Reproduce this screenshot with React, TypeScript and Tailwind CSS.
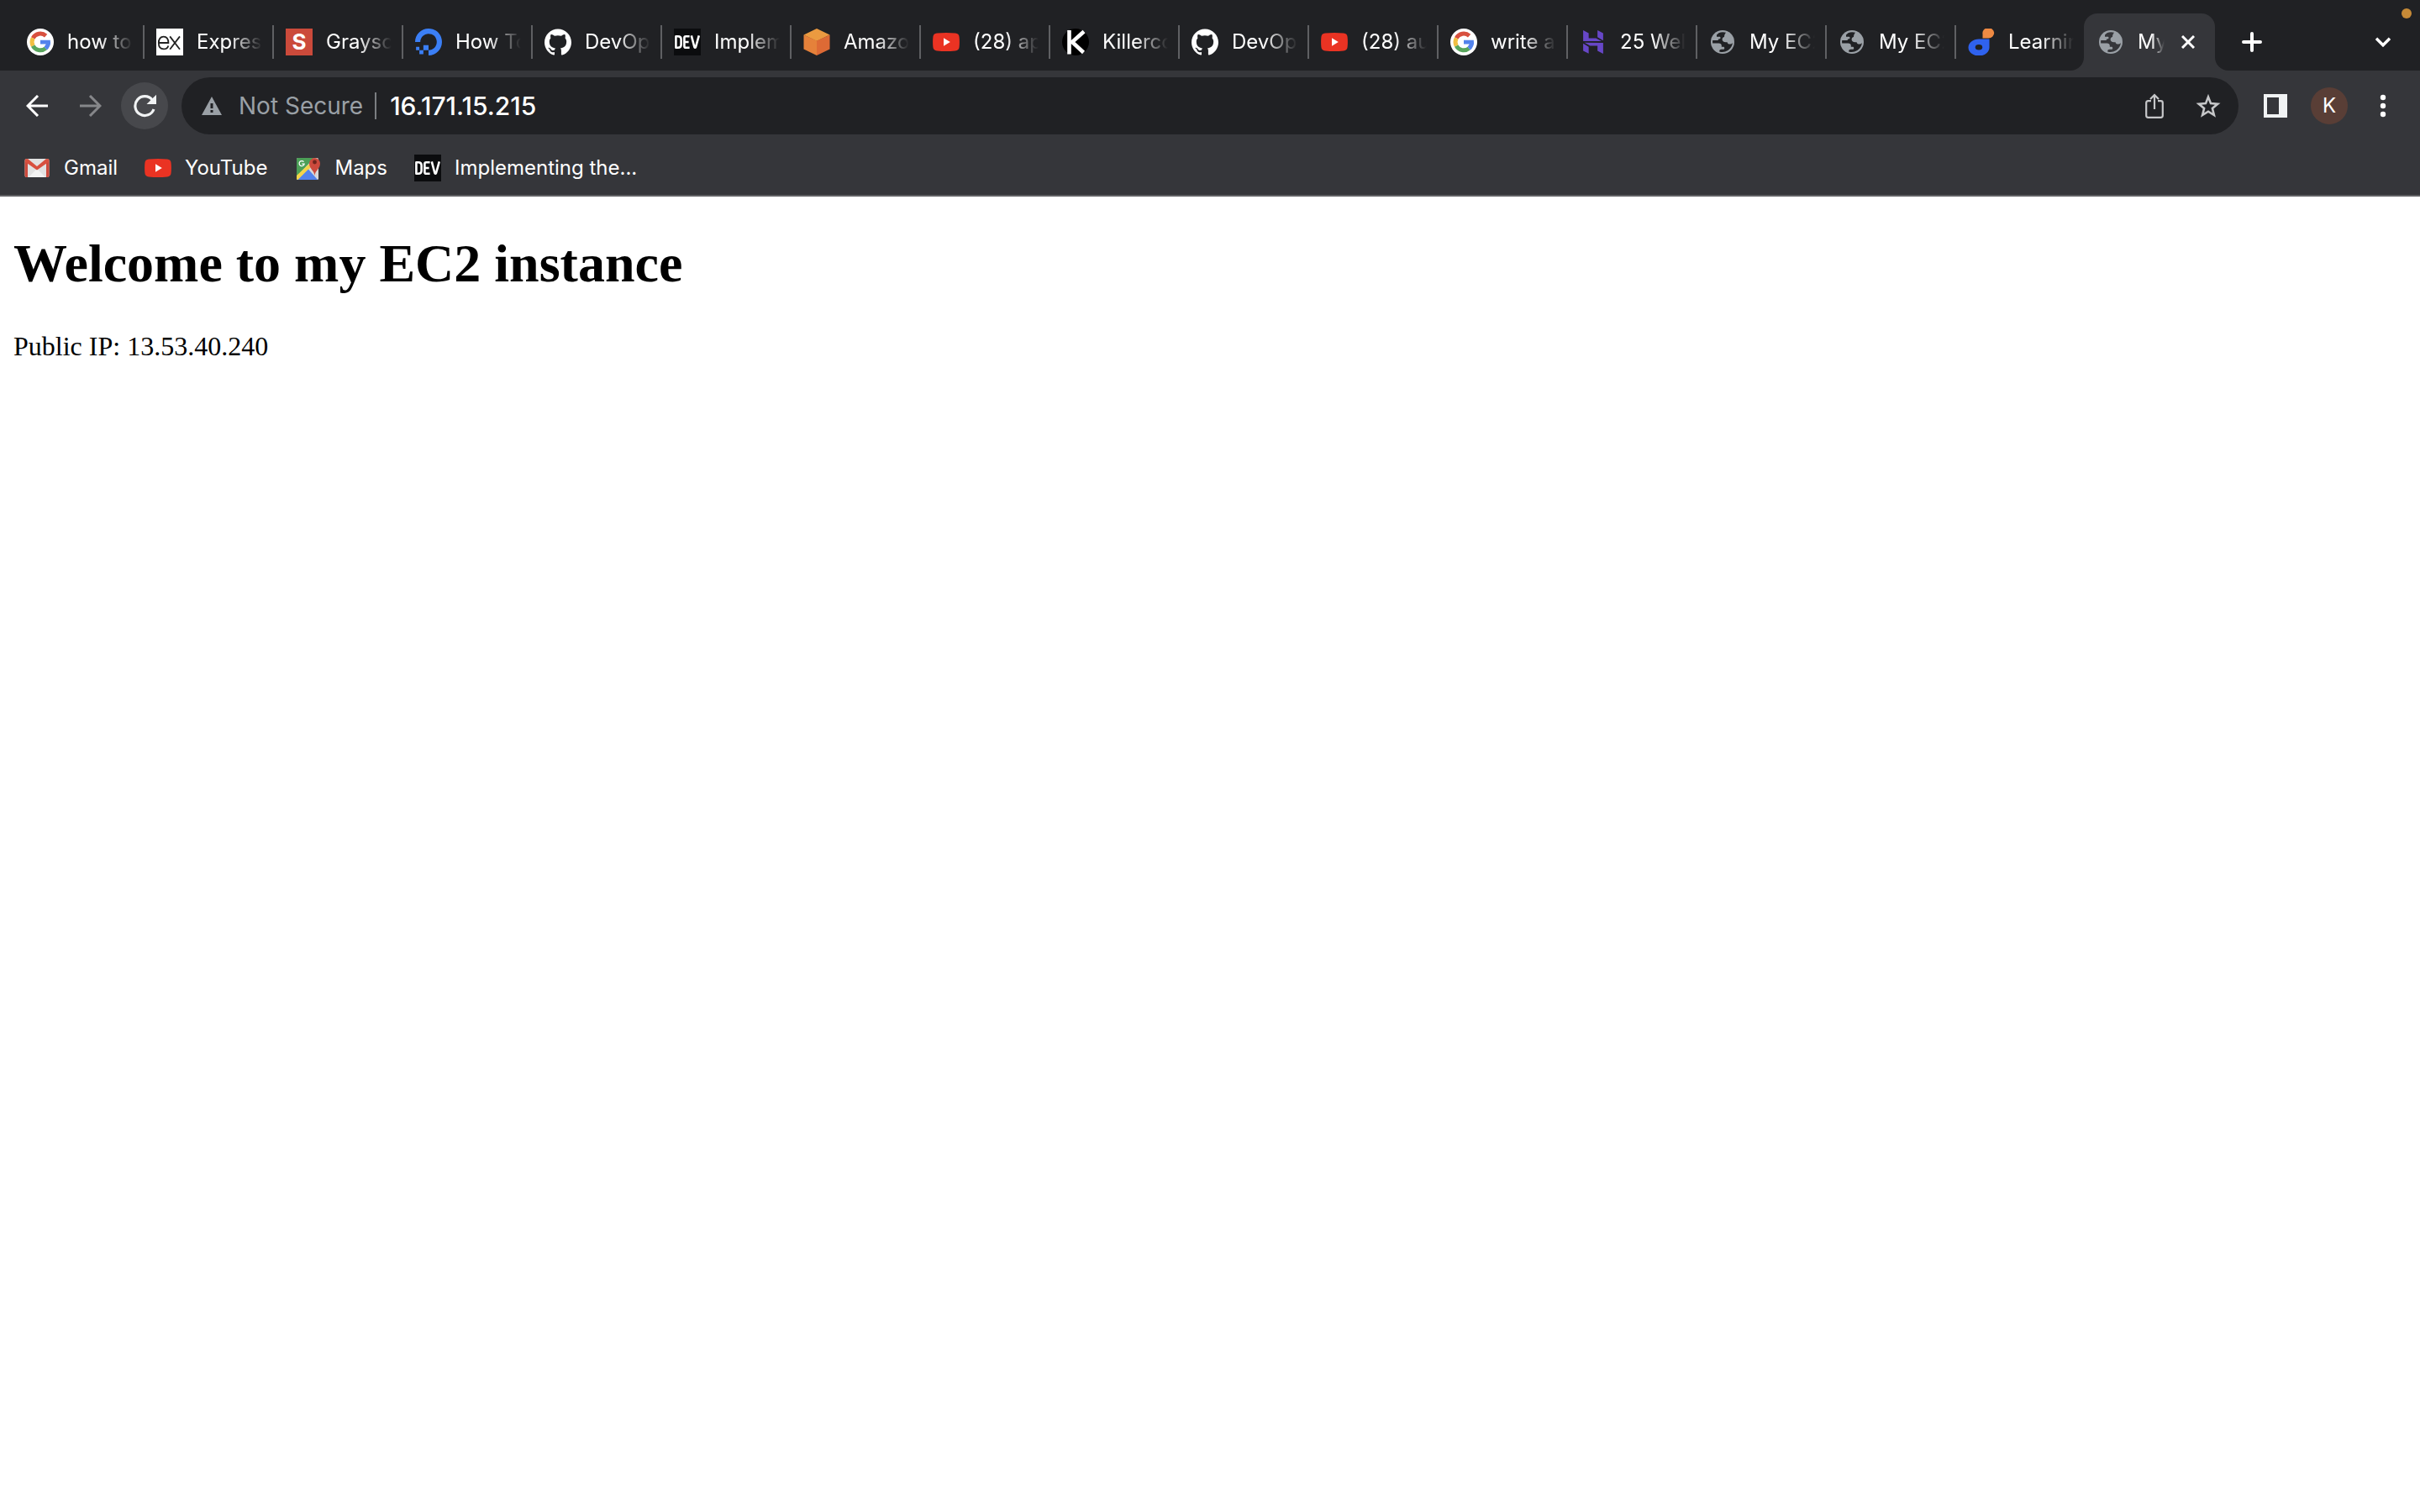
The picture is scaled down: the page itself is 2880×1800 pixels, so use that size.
import React from "react";
import { SiGithub, SiDigitalocean, SiHostinger } from "react-icons/si";

function GoogleIcon() {
  return (
    <svg viewBox="0 0 32 32" className="size-8">
      <circle cx="16" cy="16" r="16" fill="#fff" />
      <g fill="none" strokeWidth="5">
        <path d="M22.6 8.6A10 10 0 0 0 7.2 11.4" stroke="#d8503f" />
        <path d="M7.2 11.4A10 10 0 0 0 7.2 20.6" stroke="#f1bf42" />
        <path d="M7.2 20.6A10 10 0 0 0 22.2 23.6" stroke="#58a55c" />
        <path d="M22.2 23.6A10 10 0 0 0 25.6 16.2" stroke="#5383ec" />
      </g>
      <path d="M16 13.8h11.8l.2 4.6H16z" fill="#5383ec" />
    </svg>
  );
}

function ExpressIcon() {
  return (
    <svg viewBox="0 0 32 32" className="size-8">
      <rect width="32" height="32" fill="#fff" />
      <g fill="none" stroke="#222" strokeWidth="1.8">
        <path d="M3 17h11.4c0-4.500-2-7.400-5.700-7.400S2.800 12.500 2.800 17s2.200 7.400 6 7.400c2.800 0 4.800-1.400 5.500-4" />
        <path d="M16.200 9.400 28 24.700M28 9.400 16.200 24.700" />
      </g>
    </svg>
  );
}

function LetterSIcon() {
  return (
    <span className="flex size-8 items-center justify-center bg-[#cb4a3b] text-[26px] leading-8 font-bold text-white">
      S
    </span>
  );
}

function DevIcon() {
  return (
    <svg viewBox="0 0 32 32" className="size-8">
      <rect width="32" height="32" fill="#0b0c0e" />
      <g fill="none" stroke="#fff" strokeWidth="2.6" strokeLinejoin="round">
        <path d="M2.400 9.200v13.600h2.400q3.800 0 3.800-3.800v-6q0-3.800-3.800-3.800z" />
        <path d="M18.600 9.200h-4.400q-1.800 0-1.800 1.800v10q0 1.800 1.800 1.800h4.400M12.400 16h5.200" />
        <path d="M20.800 8.400l3.600 13.600q.8 1.600 1.600 0L29.800 8.400" />
      </g>
    </svg>
  );
}

function CubeIcon() {
  return (
    <svg viewBox="0 0 32 32" className="size-8">
      <path d="M16 0 31.500 7.500 16 15 .5 7.500z" fill="#eb9a40" />
      <path d="M.5 7.500 16 14.500V32L.5 24.500z" fill="#e5813a" />
      <path d="M31.500 7.500 16 14.500V32l15.500-7.500z" fill="#dd6a35" />
    </svg>
  );
}

function YouTubeIcon() {
  return (
    <svg viewBox="0 0 32 32" className="size-8">
      <path
        d="M5 5.600Q16 4.400 27 5.600q4.300.4 4.600 4.400.6 6 0 12-.3 4-4.600 4.400Q16 27.600 5 26.400.700 26 .4 22q-.6-6 0-12Q.700 6 5 5.600z"
        fill="#ea3323"
      />
      <path d="M13 11.200 20.800 16 13 20.800z" fill="#fff" />
    </svg>
  );
}

function KillercodaIcon() {
  return (
    <svg viewBox="0 0 32 32" className="size-8">
      <circle cx="16" cy="16" r="16" fill="#000" />
      <path d="M8.500 2v28.500M26 3.500 12 16l13.500 12.500" fill="none" stroke="#fff" strokeWidth="4.6" />
    </svg>
  );
}

function GlobeIcon() {
  return (
    <svg viewBox="0 0 32 32" className="size-8">
      <circle cx="16" cy="16" r="14" fill="#9aa0a6" />
      <path
        d="M20 4.800C17.500 3.900 14 4 11.500 5.200L9 7.500v2.300h3.200c.9 0 1.300.5 1.300 1.300 0 1-.6 1.400-1.500 1.400-1 0-1.300.6-1.300 1.500H4.200c-.2 1.200-.2 2.200 0 3.500h7.300c2 0 3.300 1 3.300 2.700v1.600h2c1 0 1.400.6 1.400 1.400 0 1-.5 1.500-1.500 1.500h-2c-1.600 0-2.500.9-2.500 2.300v.4c2 .7 4.500.8 6.800.1 5-1.400 8.500-5.800 8.900-10.500-.8 1-2 1.600-3.300 1.600-1.800 0-2.700-.9-3-2.300h-1.800c-2.700 0-4.200-1.200-4.200-3.200 0-1.700 1-2.700 2.400-3 0-2.300.6-3.700 2-5.300z"
        className="fill-current"
      />
    </svg>
  );
}

function DropIcon() {
  return (
    <svg viewBox="0 0 32 32" className="size-8">
      <path d="M17.500 11.500V6.500a6.900 6.200 0 1 1 6.900 5z" fill="#ef8a43" />
      <path d="M25.500 12.500v9.500a12.500 10 0 1 1-12.500-9.500z" fill="#2f62ee" />
      <ellipse cx="13" cy="22.300" rx="4.200" ry="3.200" fill="#202124" />
    </svg>
  );
}

function GmailIcon() {
  return (
    <svg viewBox="0 0 32 32" className="size-8">
      <rect x="1.500" y="5" width="29" height="22" rx="2" fill="#e2e2e2" />
      <path d="M6 27 16 17l10 10z" fill="#f3f3f3" />
      <path d="M1.500 7q0-2 2-2L5 8v19H3.500q-2 0-2-2zM30.500 7q0-2-2-2L27 8v19h1.500q2 0 2-2z" fill="#cc4a3d" />
      <path d="M2 6.500q1-1.500 3-1.500l11 9 11-9q2 0 3 1.500v2.200L16 18.500 2 8.700z" fill="#d8503f" />
    </svg>
  );
}

function MapsIcon() {
  return (
    <svg viewBox="0 0 32 32" className="size-8">
      <rect x="3" y="4" width="26" height="26" rx="1.500" fill="#d8d8d8" />
      <path d="M4.500 4H24L3 26V5.500Q3 4 4.500 4z" fill="#4c9f57" />
      <path d="M3 25 17.500 11.500l3 3L5.500 30H4.500Q3 30 3 28.500z" fill="#f5d449" />
      <path d="M4.500 30 17 17.500 28 30z" fill="#5383ec" />
      <path d="M24.500 25c-.5-6-6.500-8-6.500-14.500a6.500 6.500 0 0 1 13 0C31 17 25 19 24.500 25z" fill="#cc4a3d" />
      <circle cx="24.500" cy="9" r="2.400" fill="#70251d" />
      <path d="M11.500 8.700a3 3 0 1 0 .6 2.400H9.200" fill="none" stroke="#fff" strokeWidth="1.300" />
    </svg>
  );
}

const tabs: { title: string; icon: React.ReactNode }[] = [
  { title: "how to", icon: <GoogleIcon /> },
  { title: "Expres", icon: <ExpressIcon /> },
  { title: "Graysc", icon: <LetterSIcon /> },
  { title: "How To", icon: <SiDigitalocean className="size-8 text-[#3b7ff6]" /> },
  { title: "DevOp", icon: <SiGithub className="size-8 text-white" /> },
  { title: "Implem", icon: <DevIcon /> },
  { title: "Amazo", icon: <CubeIcon /> },
  { title: "(28) ap", icon: <YouTubeIcon /> },
  { title: "Killerco", icon: <KillercodaIcon /> },
  { title: "DevOp", icon: <SiGithub className="size-8 text-white" /> },
  { title: "(28) au", icon: <YouTubeIcon /> },
  { title: "write a", icon: <GoogleIcon /> },
  { title: "25 Wel", icon: <SiHostinger className="size-8 px-0.5 text-[#6747c7]" /> },
  { title: "My EC2", icon: <GlobeIcon /> },
  { title: "My EC2", icon: <GlobeIcon /> },
  { title: "Learnin", icon: <DropIcon /> },
];

const bookmarks = [
  { label: "Gmail", icon: <GmailIcon /> },
  { label: "YouTube", icon: <YouTubeIcon /> },
  { label: "Maps", icon: <MapsIcon /> },
  { label: "Implementing the...", icon: <DevIcon /> },
];

function TabStrip() {
  return (
    <div className="relative flex h-[84px] items-end bg-[#202124] pl-[18px]">
      <div role="tablist" className="flex h-[68px] items-center">
        {tabs.map((tab, i) => (
          <button
            key={i}
            role="tab"
            aria-selected={false}
            className={
              "flex h-10 items-center pl-3.5 " +
              (i < tabs.length - 1 ? "w-[154px] border-r-2 border-[#5f6063]" : "w-[152px]")
            }
          >
            <span className="shrink-0 text-[#202124]">{tab.icon}</span>
            <span className="ml-4 w-[78px] overflow-hidden text-left text-[24px] leading-8 whitespace-nowrap text-white mask-r-from-50% mask-r-to-100%">
              {tab.title}
            </span>
          </button>
        ))}
        <div className="relative flex h-[68px] w-[156px] items-center rounded-t-2xl bg-[#35363a] pl-4 text-[#35363a]">
          <svg viewBox="0 0 16 16" className="absolute bottom-0 -left-4 size-4">
            <path d="M16 0v16H0A16 16 0 0 0 16 0z" fill="currentColor" />
          </svg>
          <svg viewBox="0 0 16 16" className="absolute -right-4 bottom-0 size-4">
            <path d="M0 0v16h16A16 16 0 0 1 0 0z" fill="currentColor" />
          </svg>
          <button role="tab" aria-selected className="flex items-center">
            <GlobeIcon />
            <span className="ml-4 w-8 overflow-hidden text-left text-[24px] leading-8 whitespace-nowrap text-white mask-r-from-50% mask-r-to-100%">
              My
            </span>
          </button>
          <button aria-label="Close tab" className="ml-3 flex size-8 items-center justify-center">
            <svg viewBox="0 0 16 16" className="size-4" stroke="#fff" strokeWidth="3">
              <path d="M1 1l14 14M15 1 1 15" />
            </svg>
          </button>
        </div>
      </div>
      <button aria-label="New tab" className="mb-[14px] ml-6 flex size-10 items-center justify-center">
        <svg viewBox="0 0 24 24" className="size-6" stroke="#fff" strokeWidth="4" strokeLinecap="round">
          <path d="M12 2v20M2 12h20" />
        </svg>
      </button>
      <button aria-label="Search tabs" className="mr-6 mb-[14px] ml-auto flex size-10 items-center justify-center">
        <svg viewBox="0 0 20 12" className="h-3 w-5" fill="none" stroke="#fff" strokeWidth="3.4">
          <path d="M2 1.800l8 8 8-8" />
        </svg>
      </button>
      <span className="absolute top-2.5 right-2.5 size-3 rounded-full bg-[#c68a37]" />
    </div>
  );
}

function Toolbar() {
  return (
    <div className="flex h-[84px] items-center pr-6 pl-4">
      <button aria-label="Back" className="flex size-14 items-center justify-center">
        <svg viewBox="0 0 26 26" className="size-[26px]" fill="none" stroke="#fff" strokeWidth="3">
          <path d="M26 13H2M14 1 2 13l12 12" />
        </svg>
      </button>
      <button aria-label="Forward" className="ml-2 flex size-14 items-center justify-center">
        <svg viewBox="0 0 26 26" className="size-[26px]" fill="none" stroke="#86878a" strokeWidth="3">
          <path d="M0 13h24M12 1l12 12-12 12" />
        </svg>
      </button>
      <button aria-label="Reload" className="ml-2 flex size-14 items-center justify-center rounded-full bg-[#47484c]">
        <svg viewBox="0 0 28 28" className="size-7">
          <path d="M23.200 7A11.400 11.400 0 1 0 25 18" fill="none" stroke="#f1f3f4" strokeWidth="3.2" />
          <path d="M28 .8V12H16.500z" fill="#f1f3f4" />
        </svg>
      </button>
      <div className="ml-4 flex h-[68px] flex-1 items-center rounded-full bg-[#202124] pr-[18px] pl-6 text-[28px] leading-9">
        <button className="flex items-center text-[#9aa0a6]">
          <svg viewBox="0 0 24 22" className="h-[22px] w-6">
            <path d="M12 0 24 22H0z" fill="#9aa0a6" />
            <path d="M10.500 8h3v6h-3zM10.500 16h3v3h-3z" fill="#202124" />
          </svg>
          <span className="ml-5">Not Secure</span>
        </button>
        <span className="ml-[14px] h-8 w-0.5 bg-[#7b7e82]" />
        <input
          aria-label="Address"
          defaultValue="16.171.15.215"
          className="ml-4 min-w-0 flex-1 bg-transparent text-[30px] font-medium text-white outline-none"
        />
        <button aria-label="Share this page" className="flex size-9 items-center justify-center">
          <svg viewBox="0 0 22 30" className="h-[30px] w-[22px]" fill="none" stroke="#c6c7c9" strokeWidth="2.2">
            <path d="M7 9.200H3.500Q1.200 9.200 1.200 11.500v15q0 2.300 2.300 2.300h15q2.300 0 2.300-2.300v-15q0-2.300-2.300-2.300H15M11 19V2M6 7l5-5 5 5" />
          </svg>
        </button>
        <button aria-label="Bookmark this tab" className="ml-7 flex size-9 items-center justify-center">
          <svg viewBox="0 0 30 29" className="h-[29px] w-[30px]" fill="none" stroke="#c6c7c9" strokeWidth="2.6">
            <path d="M15 3.400l3 7.700 8.200.6-6.300 5.300 2 8-6.900-4.300L8.100 25l2-8-6.300-5.300 8.200-.6z" />
          </svg>
        </button>
      </div>
      <button aria-label="Side panel" className="ml-6 flex size-10 items-center justify-center">
        <svg viewBox="0 0 28 28" className="size-7">
          <path d="M0 0h28v28H0zM4 4v20h14V4z" fill="#f1f3f4" fillRule="evenodd" />
        </svg>
      </button>
      <button
        aria-label="Profile"
        className="ml-[22px] flex size-11 items-center justify-center rounded-full bg-[#593e36] text-[24px] leading-8 text-white"
      >
        K
      </button>
      <button aria-label="Menu" className="ml-[22px] flex size-10 items-center justify-center">
        <svg viewBox="0 0 8 28" className="h-7 w-2" fill="#fff">
          <circle cx="4" cy="4" r="3.200" />
          <circle cx="4" cy="14" r="3.200" />
          <circle cx="4" cy="24" r="3.200" />
        </svg>
      </button>
    </div>
  );
}

function BookmarksBar() {
  return (
    <nav aria-label="Bookmarks" className="flex h-[66px] items-center gap-8 border-b-2 border-[#5f6063] pl-7">
      {bookmarks.map((b) => (
        <a key={b.label} href="#" className="flex items-center gap-4 text-[24px] leading-8 text-white">
          {b.icon}
          {b.label}
        </a>
      ))}
    </nav>
  );
}

export default function App() {
  return (
    <div className="min-h-screen bg-white">
      <header className="bg-[#35363a] font-['Inter',sans-serif] text-white">
        <TabStrip />
        <Toolbar />
        <BookmarksBar />
      </header>
      <main className="px-4 pt-[43px] font-['Liberation_Serif',serif] text-black">
        <h1 className="text-[64px] leading-[74px] font-bold">Welcome to my EC2 instance</h1>
        <p className="mt-[43px] text-[32px] leading-9">Public IP: 13.53.40.240</p>
      </main>
    </div>
  );
}
